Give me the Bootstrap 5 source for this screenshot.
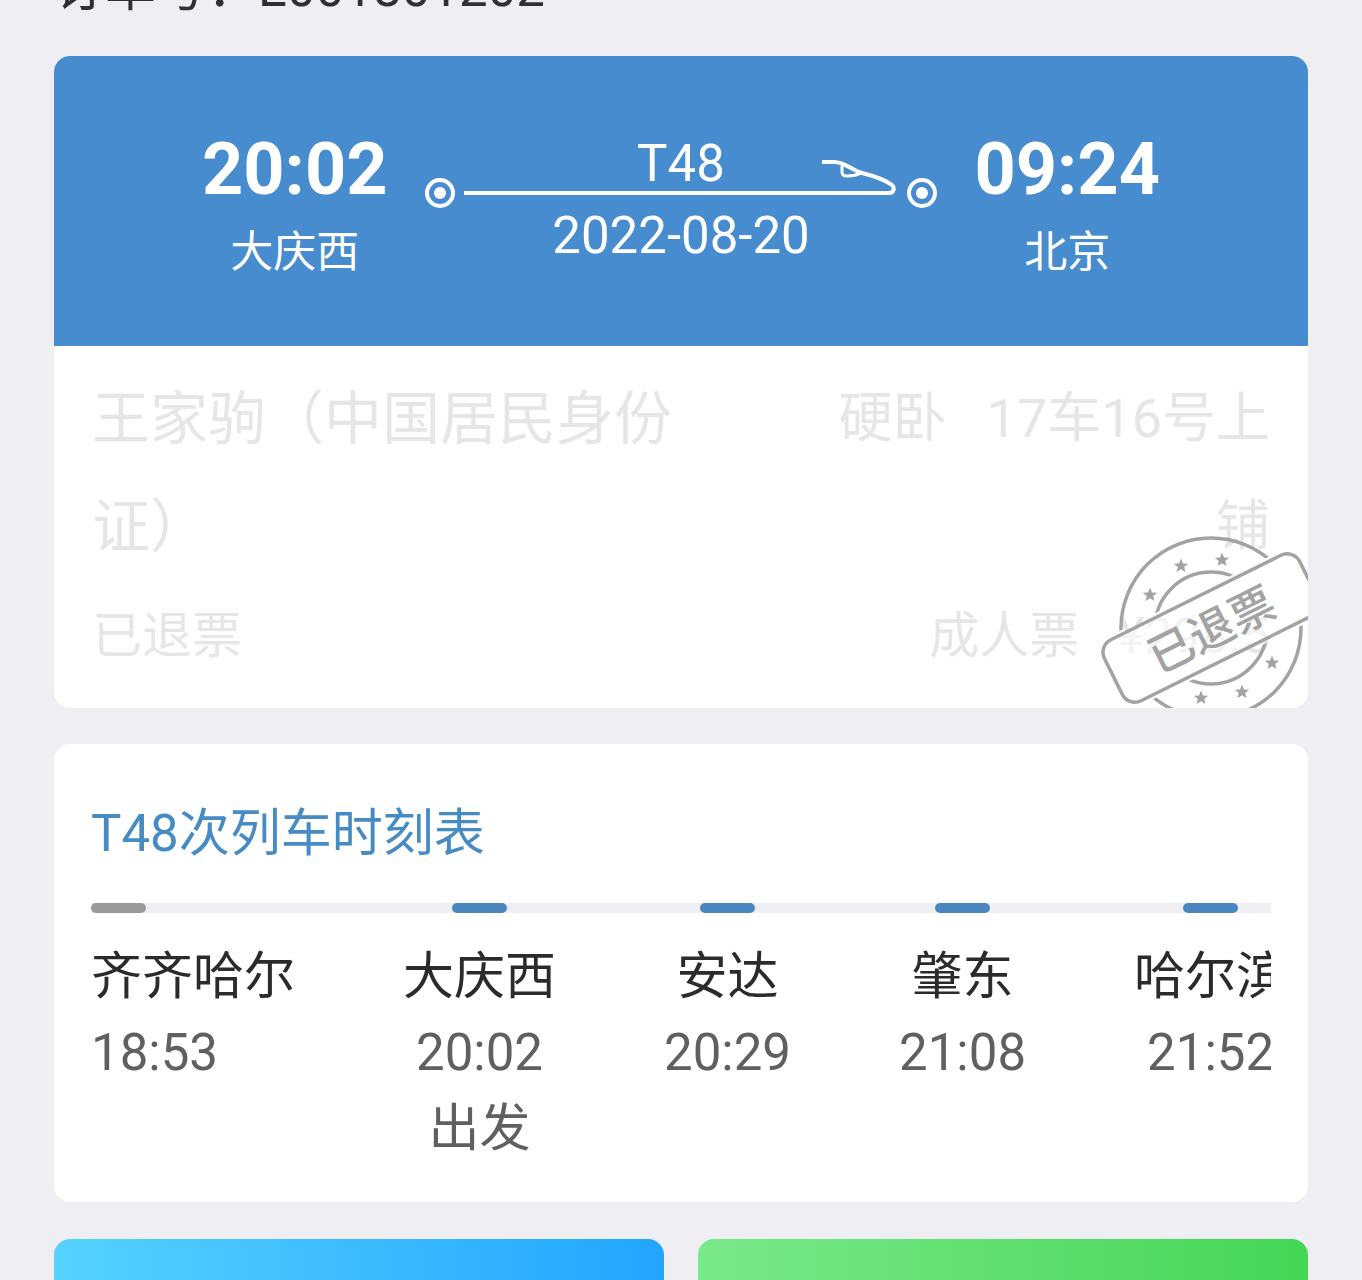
<!DOCTYPE html>
<html lang="zh-CN">
<head>
<meta charset="utf-8">
<meta name="viewport" content="width=device-width, initial-scale=1">
<title>订单详情</title>
<link href="https://cdn.jsdelivr.net/npm/bootstrap@5.3.0/dist/css/bootstrap.min.css" rel="stylesheet">
<style>
body{background:#eeeef3;color:#303034;font-family:Roboto,"Noto Sans CJK SC",sans-serif;font-size:51px;line-height:72px;height:100vh;overflow:hidden}
.page{padding:0 54px}
.order-no{margin-top:-47px;margin-bottom:31px}
.panel{background:#fff;border-radius:16px;overflow:hidden}
.trip{background:#468ccf;color:#fff;padding:72px 148px 54px}
.clock{font-size:72px;font-weight:700;line-height:84px}
.station{font-size:43px;line-height:80px}
.route{padding:0 37px}
.rail{height:54px;margin:-44px 0 -10px}
.rail-line{height:4px;margin:0 0 15px 9px;background:#fff}
.rail-train{width:74px;height:42px;margin:0 11px 13px 0}
.rail-dot{width:30px;height:32px}
.passenger{color:#e6e6e6;padding:19px 38px 17px}
.who{font-size:58px;line-height:108px;max-width:600px}
.seat{font-size:54px;line-height:108px;max-width:450px;white-space:pre-wrap}
.fare{font-size:50px;line-height:110px}
.price{margin-left:39px}
.stamp{right:-12px;bottom:-12px;width:220px;height:200px}
.stamp text{font:500 45px "Noto Sans CJK SC",sans-serif}
.timetable{margin-top:36px;padding:54px 37px 35px}
.tt-title{font-size:51px;line-height:72px;color:#468bc3;font-weight:400}
.tt-scroll{overflow:hidden;margin-top:33px}
.stops{width:max-content}
.stop{position:relative;text-align:center;padding-top:36px;color:#606060;line-height:76px}
.stop + .stop{margin-left:108px}
.stop::before{content:"";position:absolute;left:0;right:-124px;top:0;height:10px;background:#eeeef3}
.stop:last-child::before{right:0}
.stop::after{content:"";position:absolute;top:0;left:50%;margin-left:-28px;width:55px;height:10px;border-radius:5px;background:#4a87c0}
.stop.passed{text-align:left}
.stop.passed::after{left:0;margin-left:0;background:#999}
.stop-name{color:#2b2b2b}
.actions{gap:34px;margin-top:37px}
.act{height:100px;border:0;border-radius:16px}
.act-blue{background:linear-gradient(90deg,#55d2ff,#22a5ff)}
.act-green{background:linear-gradient(90deg,#7ae88a,#44d655)}
</style>
</head>
<body>
<main class="page">
  <div class="order-no">订单号：E001801202</div>

  <section class="panel position-relative">
    <div class="trip d-flex justify-content-between align-items-start">
      <div class="text-center">
        <div class="clock">20:02</div>
        <div class="station">大庆西</div>
      </div>
      <div class="route text-center flex-grow-1">
        <div>T48</div>
        <div class="rail d-flex align-items-end">
          <svg class="rail-dot flex-shrink-0" viewBox="0 0 30 32" aria-hidden="true"><circle cx="15" cy="15" r="13" fill="none" stroke="#fff" stroke-width="4"/><circle cx="15" cy="15" r="6" fill="#fff"/></svg>
          <div class="rail-line flex-grow-1"></div>
          <svg class="rail-train flex-shrink-0" viewBox="0 0 74 42" fill="none" stroke="#fff" stroke-width="4" aria-hidden="true"><path d="M0 38H67C72 38 73 33 70 30C62 24 52 21 40 18C30 15 23 7 12 7H0"/><path stroke-width="3" d="M20 11V17Q20 21 25 21C31 21 35 20 40 18L24 11"/></svg>
          <svg class="rail-dot flex-shrink-0" viewBox="0 0 30 32" aria-hidden="true"><circle cx="15" cy="15" r="13" fill="none" stroke="#fff" stroke-width="4"/><circle cx="15" cy="15" r="6" fill="#fff"/></svg>
        </div>
        <div>2022-08-20</div>
      </div>
      <div class="text-center">
        <div class="clock">09:24</div>
        <div class="station">北京</div>
      </div>
    </div>
    <div class="passenger">
      <div class="d-flex justify-content-between">
        <div class="who">王家驹（中国居民身份证）</div>
        <div class="seat text-end">硬卧   17车16号上铺</div>
      </div>
      <div class="fare d-flex justify-content-between">
        <div>已退票</div>
        <div>成人票<span class="price">¥298.5</span></div>
      </div>
    </div>
    <!-- refund stamp, cut by the card's edge -->
    <svg class="stamp position-absolute" viewBox="0 0 220 200" role="img" aria-label="已退票">
      <defs>
        <mask id="band" maskUnits="userSpaceOnUse" x="0" y="0" width="220" height="200">
          <rect width="220" height="200" fill="#fff"/>
          <rect x="-20" y="70" width="262" height="76" fill="#000" transform="rotate(-26.4 111 108)"/>
        </mask>
        <path id="star" fill="#a3a3a3" d="M0-7.5L2-2.6L7.2-2.3L3.2 1L4.5 6.1L0 3.3L-4.5 6.1L-3.2 1L-7.2-2.3L-2-2.6Z"/>
      </defs>
      <g fill="none" stroke="#a3a3a3" stroke-width="3.5">
        <g mask="url(#band)"><circle cx="111" cy="108" r="90"/><circle cx="111" cy="108" r="56"/></g>
        <rect x="2" y="74" width="218" height="68" rx="14" fill="#fff" fill-opacity=".5" transform="rotate(-26.4 111 108)"/>
      </g>
      <use href="#star" x="50" y="75"/><use href="#star" x="81" y="46"/><use href="#star" x="122" y="40"/>
      <use href="#star" x="172" y="143"/><use href="#star" x="142" y="172"/><use href="#star" x="101" y="178"/>
      <text x="111" y="126" text-anchor="middle" fill="#a3a3a3" transform="rotate(-26.4 111 108)">已退票</text>
    </svg>
  </section>

  <section class="panel timetable">
    <h2 class="tt-title mb-0">T48次列车时刻表</h2>
    <div class="tt-scroll">
      <div class="stops d-flex">
        <div class="stop passed"><div class="stop-name">齐齐哈尔</div>18:53</div>
        <div class="stop"><div class="stop-name">大庆西</div>20:02<br>出发</div>
        <div class="stop"><div class="stop-name">安达</div>20:29</div>
        <div class="stop"><div class="stop-name">肇东</div>21:08</div>
        <div class="stop"><div class="stop-name">哈尔滨</div>21:52</div>
      </div>
    </div>
  </section>

  <div class="actions d-flex">
    <button class="act act-blue flex-fill" type="button" aria-label="改签"></button>
    <button class="act act-green flex-fill" type="button" aria-label="餐饮"></button>
  </div>
</main>
<script src="https://cdn.jsdelivr.net/npm/bootstrap@5.3.0/dist/js/bootstrap.bundle.min.js"></script>
</body>
</html>
